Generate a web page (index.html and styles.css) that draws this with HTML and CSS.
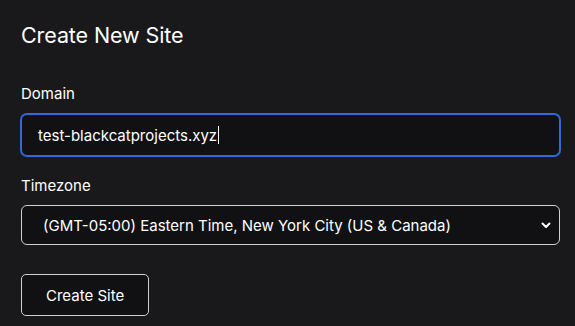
FILE: index.html
```html
<!DOCTYPE html>
<html lang="en">
<head>
  <meta charset="UTF-8">
  <title>Create New Site</title>
  <link rel="stylesheet" href="styles.css">
</head>
<body>
  <form class="site-form">
    <h1>Create New Site</h1>
    <label class="field">
      <span class="label">Domain</span>
      <div class="input focused">test-blackcatprojects.xyz<span class="caret"></span></div>
    </label>
    <label class="field">
      <span class="label">Timezone</span>
      <div class="select-wrap">
        <select class="select">
          <option>(GMT-05:00) Eastern Time, New York City (US &amp; Canada)</option>
        </select>
        <svg class="chevron" width="10" height="7" viewBox="0 0 10 7"><path d="M1.5 1.5 L5 5 L8.5 1.5" fill="none" stroke="#fff" stroke-width="2" stroke-linecap="round" stroke-linejoin="round"/></svg>
      </div>
    </label>
    <button type="button" class="submit">Create Site</button>
  </form>
</body>
</html>
```
FILE: styles.css
```css
* {margin: 0; padding: 0; box-sizing: border-box;}
body {
  font-family: 'Inter', sans-serif;
  background: #19191b;
  color: #fff;
  padding: 19px 15px 0 21px;
}
.site-form {
  display: flex;
  flex-direction: column;
  align-items: flex-start;
}
h1 {
  font-size: 21.5px;
  font-weight: 400;
  line-height: 32px;
  margin-bottom: 33px;
  letter-spacing: -0.1px;
}
.field {
  display: flex;
  flex-direction: column;
  width: 100%;
  margin-bottom: 20px;
}
.label {
  font-size: 15px;
  line-height: 20px;
  margin-bottom: 10px;
}
.input {
  height: 42px;
  border: 1px solid #2f6bdf;
  box-shadow: 0 0 0 1px #2f6bdf;
  border-radius: 6px;
  background: #111113;
  padding: 0 16px;
  font-size: 15px;
  display: flex;
  align-items: center;
}
.caret {
  display: inline-block;
  width: 1px;
  height: 18px;
  background: #fff;
  margin-left: 1px;
}
.select-wrap {
  position: relative;
  margin-top: -1px;
}
.select {
  appearance: none;
  width: 100%;
  height: 40px;
  border: 1px solid #d0d0d0;
  border-radius: 6px;
  background: #111113;
  color: #fff;
  font-family: inherit;
  font-size: 15px;
  padding: 0 30px 0 21px;
}
.chevron {
  position: absolute;
  right: 9px;
  top: 17px;
}
.submit {
  margin-top: 9px;
  height: 42px;
  padding: 0 24px;
  border: 1px solid #cfcfcf;
  border-radius: 5px;
  background: #111113;
  color: #fff;
  font-family: inherit;
  font-size: 15px;
}
```
